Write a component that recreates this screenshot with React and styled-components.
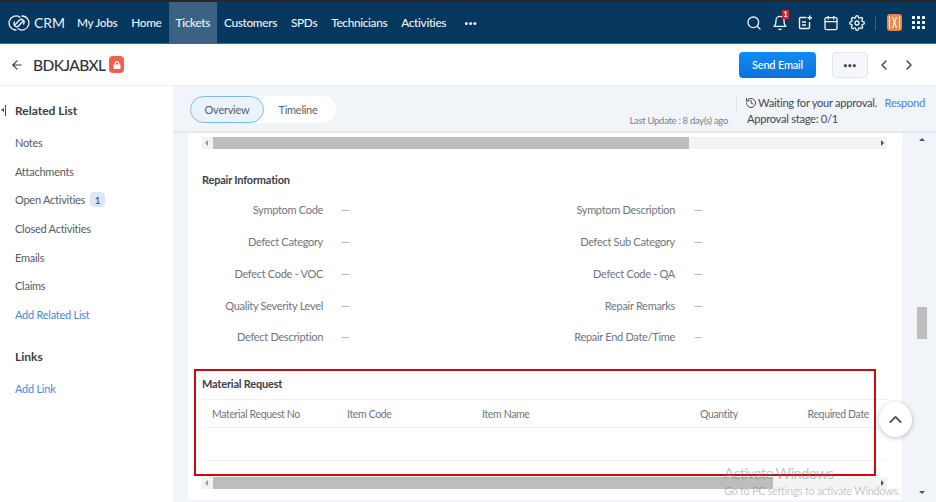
import React from 'react';
import styled, { createGlobalStyle } from 'styled-components';
import { FiSearch, FiBell, FiCalendar, FiSettings, FiChevronLeft, FiChevronRight, FiChevronUp, FiArrowLeft } from 'react-icons/fi';
import { FaLock } from 'react-icons/fa';
import { History } from 'lucide-react';

const GlobalStyle = createGlobalStyle`
  html, body { margin: 0; padding: 0; height: 100%; overflow: hidden; }
  body { font-family: 'Lato', 'Liberation Sans', sans-serif; background: #fff; }
  * { box-sizing: border-box; }
`;

const Page = styled.div`
  width: 936px;
  height: 502px;
  display: flex;
  flex-direction: column;
  position: relative;
  overflow: hidden;
`;

const TopBar = styled.header`
  height: 44px;
  flex: none;
  display: flex;
  align-items: stretch;
  background: #05375f;
  border-top: 2px solid #26292c;
  border-bottom: 1px solid #3d6a8c;
  color: #eef3f7;
`;

const Brand = styled.div`
  width: 69px;
  margin-right: 1px;
  padding-left: 8px;
  display: flex;
  align-items: center;
  gap: 4px;
  font-size: 14px;
`;

const NavItem = styled.div`
  display: flex;
  align-items: center;
  padding: 0 ${p => p.$pad ?? 7}px;
  font-size: 11.8px;
  letter-spacing: -0.33px;
  font-weight: 500;
  background: ${p => (p.$active ? '#3b6283' : 'transparent')};
`;

const Dots = styled(NavItem)`
  padding: 0 11px;
  font-size: 7px;
  letter-spacing: 0.2px;
`;

const TopIcons = styled.div`
  margin-left: auto;
  padding-right: 11px;
  display: flex;
  align-items: center;
  gap: 10px;
  font-size: 16px;
`;

const BellWrap = styled.span`
  position: relative;
  display: flex;
`;

const Badge = styled.span`
  position: absolute;
  top: -5px;
  right: -1px;
  width: 7px;
  height: 9px;
  background: #d8232f;
  color: #fff;
  font-size: 7px;
  font-weight: 700;
  line-height: 9px;
  text-align: center;
`;

const IconDivider = styled.span`
  width: 1px;
  height: 14px;
  background: #36607f;
`;

const Avatar = styled.span`
  width: 15px;
  height: 17px;
  margin-left: 1px;
  border-radius: 3px;
  background: #ee8440;
  display: flex;
  align-items: center;
  justify-content: center;
`;

const HeaderBar = styled.div`
  height: 42px;
  flex: none;
  display: flex;
  align-items: center;
  padding: 0 20px 0 10px;
  background: #fff;
  border-bottom: 1px solid #eef0f3;
`;

const Title = styled.h1`
  margin: 0 4px 0 9px;
  font-size: 15.5px;
  letter-spacing: -0.6px;
  font-weight: 500;
  color: #30343b;
`;

const LockBadge = styled.span`
  width: 15px;
  height: 17px;
  border-radius: 4px;
  background: #f2604f;
  color: #fff;
  display: flex;
  align-items: center;
  justify-content: center;
  font-size: 8px;
`;

const SendButton = styled.button`
  width: 77px;
  height: 26px;
  margin-left: auto;
  border: 0;
  border-radius: 4px;
  background: linear-gradient(#0f8bf5, #0a72dc);
  color: #fff;
  font: 500 11px 'Lato', sans-serif;
  letter-spacing: -0.2px;
`;

const MoreButton = styled.button`
  width: 36px;
  height: 26px;
  margin-left: 16px;
  padding: 0;
  border: 1px solid #dfe3ea;
  border-radius: 4px;
  background: #f6f7fa;
  color: #444b57;
  font: 700 7px 'Lato', sans-serif;
  letter-spacing: 0.5px;
`;

const Pager = styled.div`
  display: flex;
  gap: 9px;
  margin-left: 8px;
  margin-right: -1px;
  font-size: 16px;
  color: #333a45;
`;

const Body = styled.div`
  flex: 1;
  min-height: 0;
  display: flex;
`;

const Sidebar = styled.aside`
  width: 173px;
  flex: none;
  background: #fff;
  padding: 16px 0 0 15px;
  position: relative;
`;

const Collapse = styled.span`
  position: absolute;
  left: 5px;
  top: 19px;
  width: 1px;
  height: 11px;
  background: #444b57;

  &::before {
    content: '';
    position: absolute;
    left: -4px;
    top: 3px;
    border-top: 2.5px solid transparent;
    border-bottom: 2.5px solid transparent;
    border-right: 3px solid #444b57;
  }
`;

const SideHeading = styled.h3`
  margin: ${p => p.$top ?? 0}px 0 ${p => p.$bottom ?? 8}px;
  font-size: 12px;
  line-height: 18px;
  font-weight: 700;
  color: #3a3f48;
`;

const SideItem = styled.div`
  height: 28.7px;
  display: flex;
  align-items: center;
  gap: 5px;
  font-size: 11px;
  letter-spacing: -0.25px;
  color: ${p => (p.$link ? '#4a86e0' : '#555b66')};
`;

const Count = styled.span`
  width: 15px;
  height: 15px;
  border-radius: 4px;
  background: #dbe7f8;
  color: #445;
  font-size: 10px;
  display: flex;
  align-items: center;
  justify-content: center;
`;

const Main = styled.main`
  flex: 1;
  min-width: 0;
  display: flex;
  flex-direction: column;
  background: #f1f4f8;
`;

const SubHeader = styled.div`
  height: 47px;
  flex: none;
  display: flex;
  padding: 10px 11px 0 17px;
  border-bottom: 2px solid #e3eaf2;
`;

const Tabs = styled.div`
  width: 146px;
  height: 27px;
  display: flex;
  align-items: center;
  border-radius: 14px;
  background: #fff;
  font-size: 11px;
  letter-spacing: -0.25px;
  color: #59606c;
`;

const Tab = styled.div`
  height: 100%;
  display: flex;
  align-items: center;
  justify-content: center;
  width: ${p => p.$width}px;
  border-radius: 14px;
  border: ${p => (p.$active ? '1px solid #7db8ec' : '0')};
  background: ${p => (p.$active ? '#e9f3fd' : 'transparent')};
`;

const LastUpdate = styled.div`
  margin-left: auto;
  align-self: flex-end;
  padding-bottom: 5px;
  font-size: 9.5px;
  letter-spacing: -0.3px;
  color: #7a808b;
`;

const Approval = styled.div`
  width: 189px;
  margin-left: 8px;
  margin-top: -1px;
  padding-left: 9px;
  font-size: 11.2px;
  letter-spacing: -0.3px;
  line-height: 16px;
  color: #444a55;
  white-space: nowrap;
  position: relative;
`;

const ApprovalDivider = styled.span`
  position: absolute;
  left: 0;
  top: 2px;
  width: 1px;
  height: 15px;
  background: #dde1e6;
`;

const ApprovalLine = styled.div`
  display: flex;
  align-items: center;
  gap: 1px;
`;

const ApprovalStage = styled.div`
  padding-left: 2px;
`;

const Respond = styled.span`
  margin-left: auto;
  color: #4a86e0;
`;

const Scroller = styled.div`
  flex: 1;
  min-height: 0;
  display: flex;
  padding: 0 0 2px 15px;
`;

const Card = styled.section`
  width: 714px;
  flex: none;
  height: 100%;
  padding: 4px 15px 0 14px;
  background: #fff;
  position: relative;
`;

const HScroll = styled.div`
  height: 12px;
  display: flex;
  align-items: center;
  justify-content: space-between;
  padding: 0 3px;
  background: #f3f3f4;
  position: relative;
`;

const Thumb = styled.div`
  position: absolute;
  left: 11px;
  top: 0;
  bottom: 0;
  background: #bdbdbd;
`;

const Arrow = styled.span`
  width: 0;
  height: 0;
  border-top: 3px solid transparent;
  border-bottom: 3px solid transparent;
  ${p => (p.$right ? 'border-left: 3px solid #555;' : 'border-right: 3px solid #999;')}
`;

const SectionTitle = styled.h4`
  margin: ${p => p.$top}px 0 0;
  font-size: 11px;
  letter-spacing: -0.2px;
  line-height: 16px;
  font-weight: 700;
  color: #3a3f48;
`;

const Fields = styled.div`
  margin-top: 6px;
  display: grid;
  grid-template-columns: 121px 18px 213px 121px 19px 1fr;
  grid-auto-rows: 31.75px;
  align-items: center;
  font-size: 11px;
  letter-spacing: -0.3px;
`;

const Label = styled.div`
  text-align: right;
  color: #6f7580;
  white-space: nowrap;
`;

const Value = styled.div`
  color: #a5a9b0;
`;

const TableHead = styled.div`
  margin-top: 7px;
  height: 29px;
  display: flex;
  align-items: center;
  padding: 1px 0 0 10px;
  border-top: 1px solid #eef0f3;
  border-bottom: 1px solid #eef0f3;
  font-size: 10.5px;
  letter-spacing: -0.35px;
  color: #6f7580;
`;

const HeadCell = styled.div`
  width: ${p => p.$width}px;
  flex: none;
  white-space: nowrap;
  text-align: ${p => p.$align ?? 'left'};
`;

const EmptyRow = styled.div`
  height: 33px;
  margin-bottom: 16px;
  border-bottom: 1px solid #f1f2f5;
`;

const RedBox = styled.div`
  position: absolute;
  left: 6px;
  top: 236px;
  width: 682px;
  height: 107px;
  border: 2px solid #c40d12;
  pointer-events: none;
`;

const UpButton = styled.div`
  position: absolute;
  left: 691px;
  top: 269px;
  width: 33px;
  height: 35px;
  border-radius: 50%;
  background: #fff;
  box-shadow: 0 1px 5px rgba(0, 0, 0, 0.25);
  display: flex;
  align-items: center;
  justify-content: center;
  color: #444b57;
  font-size: 21px;
`;

const PageScroll = styled.div`
  width: 34px;
  flex: none;
  position: relative;
`;

const PageThumb = styled.div`
  position: absolute;
  left: 15px;
  top: 174px;
  width: 10px;
  height: 32px;
  background: #bdbdbd;
`;

const PageArrow = styled.span`
  position: absolute;
  left: 17px;
  ${p => (p.$down ? 'bottom: 6px;' : 'top: 5px;')}
  width: 0;
  height: 0;
  border-left: 3px solid transparent;
  border-right: 3px solid transparent;
  ${p => (p.$down ? 'border-top: 3px solid #555;' : 'border-bottom: 3px solid #555;')}
`;

const Watermark = styled.div`
  position: absolute;
  left: 724px;
  top: 464px;
  color: rgba(120, 124, 130, 0.45);
  pointer-events: none;
`;

const WatermarkTitle = styled.div`
  font-size: 15px;
  letter-spacing: -0.7px;
  line-height: 18px;
`;

const WatermarkText = styled.div`
  font-size: 11px;
  letter-spacing: -0.35px;
  line-height: 17px;
  white-space: nowrap;
`;

const Logo = () => (
  <svg width="22" height="16" viewBox="0 0 22 16" fill="none" stroke="#eef3f7" strokeWidth="1.3" strokeLinecap="round">
    <path d="M12 2.2A7 7 0 1 0 8 15" />
    <path d="M10 13.8A7 7 0 1 0 14 1" />
    <path d="M6.5 10.5L11 5.5A2.8 2.8 0 0 1 15.5 9" />
    <path d="M15.5 5.5L11 10.5A2.8 2.8 0 0 1 6.5 7" />
  </svg>
);

const NoteIcon = () => (
  <svg width="15" height="15" viewBox="0 0 15 15" fill="none" stroke="#eef3f7" strokeWidth="1.4">
    <path d="M8.5 2.5H2.5a1 1 0 0 0-1 1v9a1 1 0 0 0 1 1h8a1 1 0 0 0 1-1V7" />
    <path d="M4 7h4M4 10h4M11.7 0.5v4.5M9.5 2.8h4.5" />
  </svg>
);

const GridIcon = () => (
  <svg width="13" height="13" viewBox="0 0 13 13" fill="#eef3f7">
    {[0, 5, 10].flatMap(y => [0, 5, 10].map(x => <rect key={`${x}-${y}`} x={x} y={y} width="3" height="3" rx="0.5" />))}
  </svg>
);

const AvatarMark = () => (
  <svg width="13" height="15" viewBox="0 0 13 15" fill="none" stroke="#fff" strokeWidth="1.2">
    <path d="M1.5 1v13M11.5 1v13M4.5 2l4 11M8.5 2l-4 11" />
  </svg>
);

const navItems = ['My Jobs', 'Home', 'Tickets', 'Customers', 'SPDs', 'Technicians', 'Activities'];

const sideItems = ['Notes', 'Attachments', 'Open Activities', 'Closed Activities', 'Emails', 'Claims'];

const repairFields = [
  ['Symptom Code', 'Symptom Description'],
  ['Defect Category', 'Defect Sub Category'],
  ['Defect Code - VOC', 'Defect Code - QA'],
  ['Quality Severity Level', 'Repair Remarks'],
  ['Defect Description', 'Repair End Date/Time'],
];

const App = () => (
  <Page>
    <GlobalStyle />
    <TopBar>
      <Brand>
        <Logo />
        CRM
      </Brand>
      {navItems.map(item => (
        <NavItem key={item} $active={item === 'Tickets'}>{item}</NavItem>
      ))}
      <Dots>•••</Dots>
      <TopIcons>
        <FiSearch />
        <BellWrap>
          <FiBell />
          <Badge>1</Badge>
        </BellWrap>
        <NoteIcon />
        <FiCalendar />
        <FiSettings />
        <IconDivider />
        <Avatar><AvatarMark /></Avatar>
        <GridIcon />
      </TopIcons>
    </TopBar>

    <HeaderBar>
      <FiArrowLeft size={14} color="#333a45" />
      <Title>BDKJABXL</Title>
      <LockBadge><FaLock /></LockBadge>
      <SendButton>Send Email</SendButton>
      <MoreButton>•••</MoreButton>
      <Pager>
        <FiChevronLeft />
        <FiChevronRight />
      </Pager>
    </HeaderBar>

    <Body>
      <Sidebar>
        <Collapse />
        <SideHeading>Related List</SideHeading>
        {sideItems.map(item => (
          <SideItem key={item}>
            {item}
            {item === 'Open Activities' && <Count>1</Count>}
          </SideItem>
        ))}
        <SideItem $link>Add Related List</SideItem>
        <SideHeading $top={19}>Links</SideHeading>
        <SideItem $link>Add Link</SideItem>
      </Sidebar>

      <Main>
        <SubHeader>
          <Tabs>
            <Tab $active $width={74}>Overview</Tab>
            <Tab $width={68}>Timeline</Tab>
          </Tabs>
          <LastUpdate>Last Update : 8 day(s) ago</LastUpdate>
          <Approval>
            <ApprovalDivider />
            <ApprovalLine>
              <History size={12} />
              Waiting for your approval.
              <Respond>Respond</Respond>
            </ApprovalLine>
            <ApprovalStage>Approval stage: 0/1</ApprovalStage>
          </Approval>
        </SubHeader>

        <Scroller>
          <Card>
            <HScroll>
              <Thumb style={{ width: 476 }} />
              <Arrow />
              <Arrow $right />
            </HScroll>

            <SectionTitle $top={23}>Repair Information</SectionTitle>
            <Fields>
              {repairFields.flatMap(([left, right]) => [
                <Label key={left}>{left}</Label>,
                <span key={`${left}-gap`} />,
                <Value key={`${left}-value`}>—</Value>,
                <Label key={right}>{right}</Label>,
                <span key={`${right}-gap`} />,
                <Value key={`${right}-value`}>—</Value>,
              ])}
            </Fields>

            <SectionTitle $top={23}>Material Request</SectionTitle>
            <TableHead>
              <HeadCell $width={135}>Material Request No</HeadCell>
              <HeadCell $width={135}>Item Code</HeadCell>
              <HeadCell $width={218}>Item Name</HeadCell>
              <HeadCell $width={37}>Quantity</HeadCell>
              <HeadCell $width={132} $align="right">Required Date</HeadCell>
            </TableHead>
            <EmptyRow />
            <HScroll>
              <Thumb style={{ width: 560 }} />
              <Arrow />
              <Arrow $right />
            </HScroll>

            <RedBox />
            <UpButton><FiChevronUp /></UpButton>
          </Card>
          <PageScroll>
            <PageArrow />
            <PageThumb />
            <PageArrow $down />
          </PageScroll>
        </Scroller>
      </Main>
    </Body>

    <Watermark>
      <WatermarkTitle>Activate Windows</WatermarkTitle>
      <WatermarkText>Go to PC settings to activate Windows.</WatermarkText>
    </Watermark>
  </Page>
);

export default App;
